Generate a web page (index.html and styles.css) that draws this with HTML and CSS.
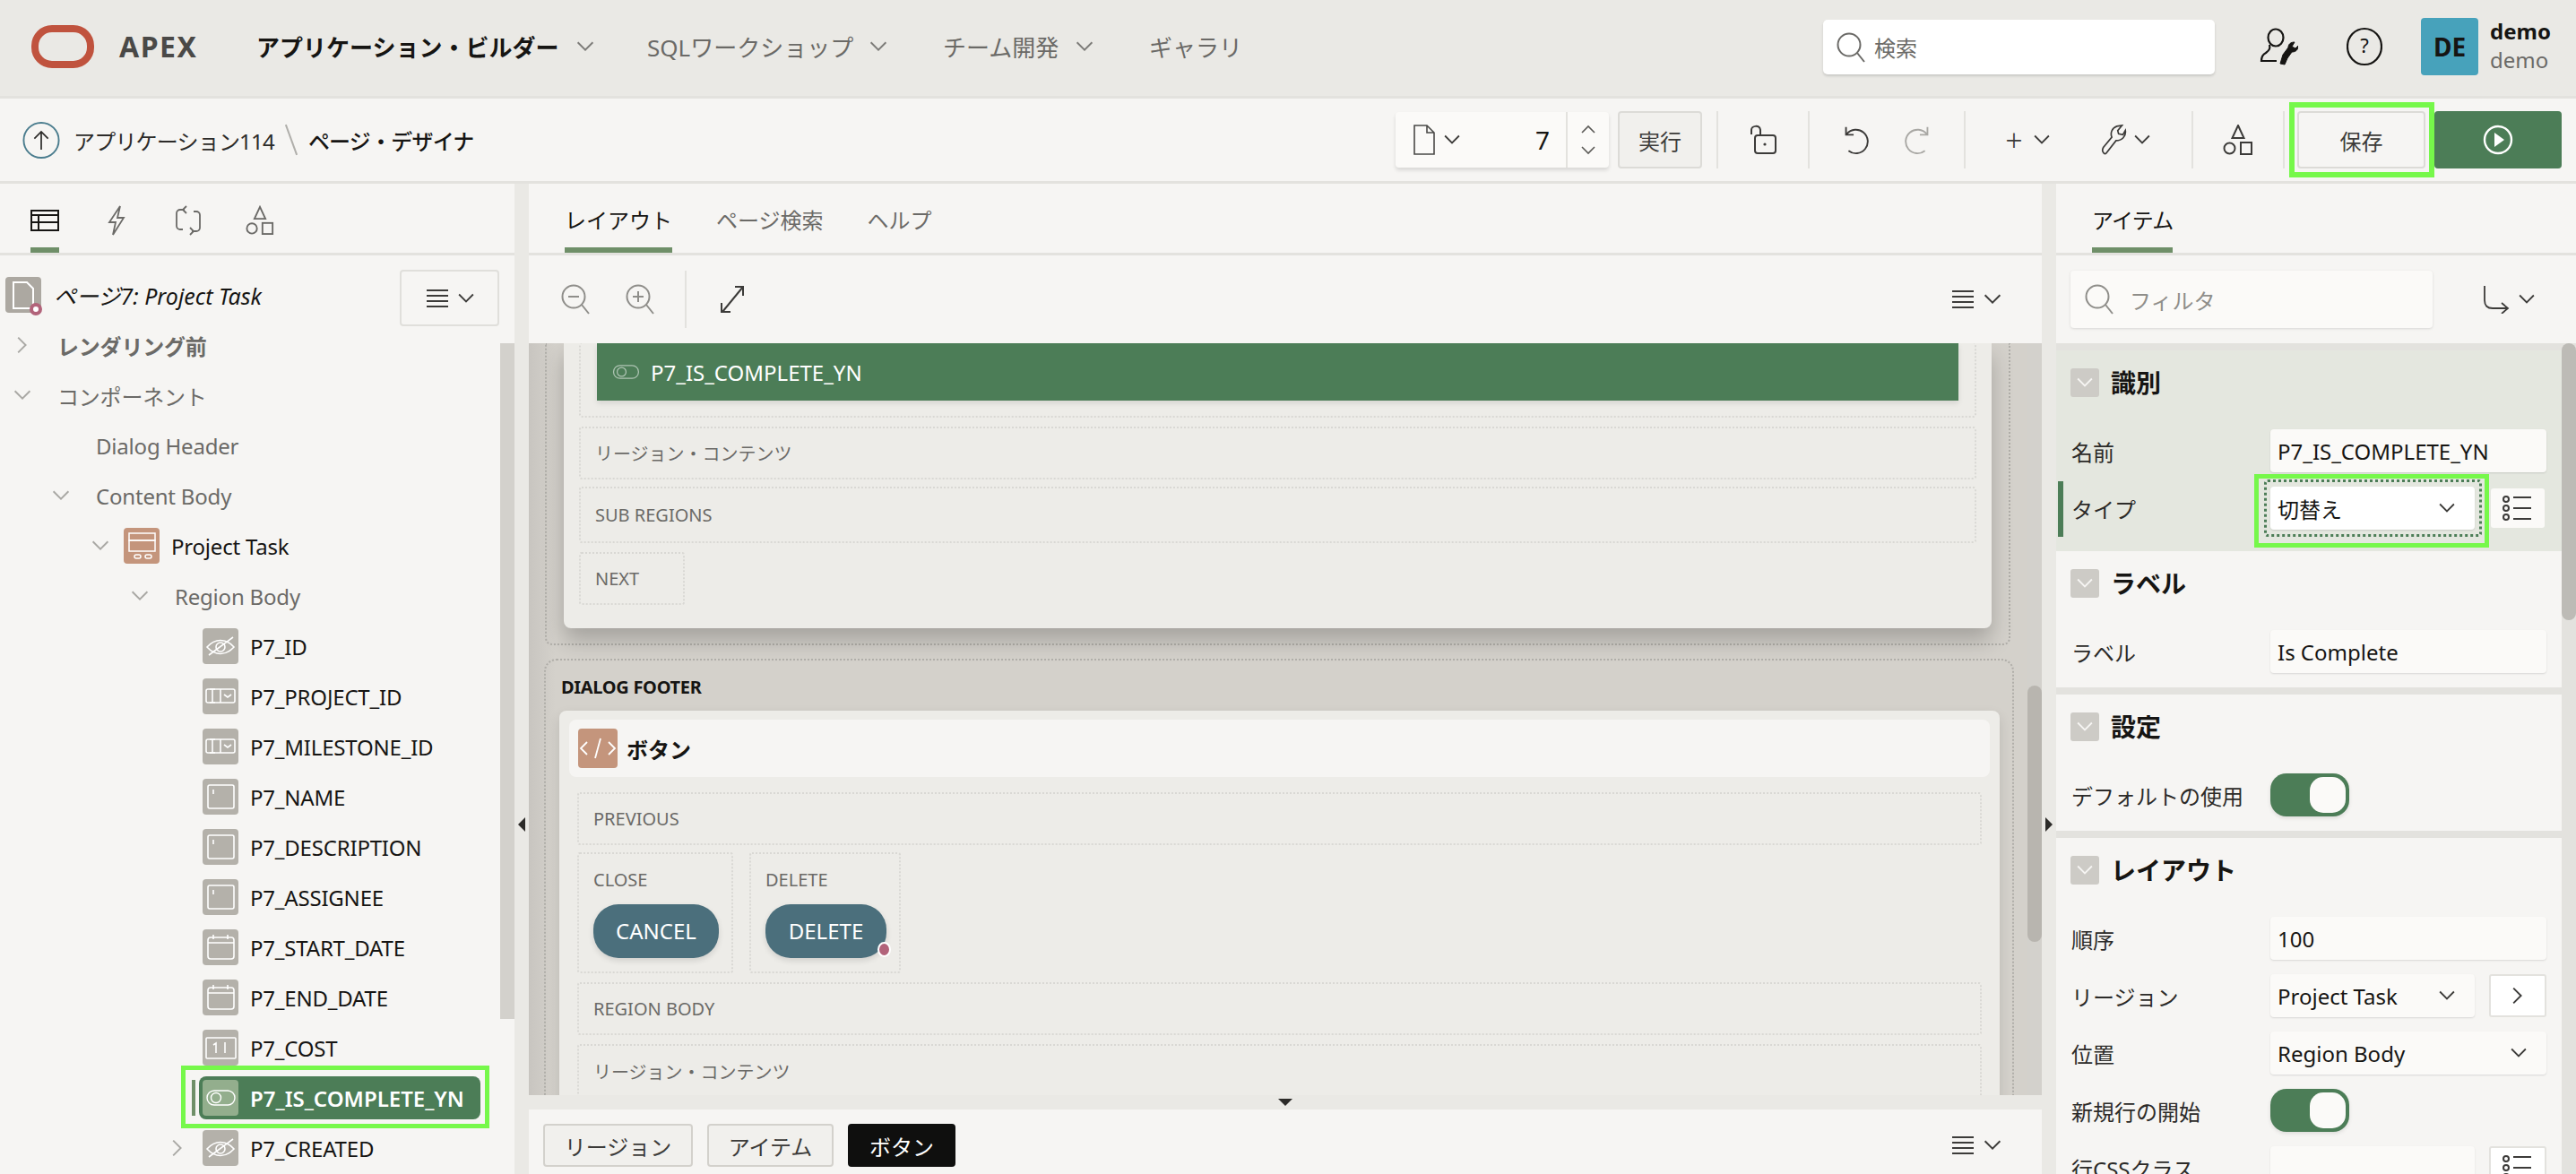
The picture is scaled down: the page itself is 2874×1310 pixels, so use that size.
FILE: index.html
```html
<!DOCTYPE html>
<html lang="ja">
<head>
<meta charset="utf-8">
<title>APEX ページ・デザイナ</title>
<link rel="stylesheet" href="styles.css">
</head>
<body>
<svg class="defs" width="0" height="0">
  <symbol id="chev" viewBox="0 0 16 10"><path d="M1 1l7 7 7-7" fill="none" stroke="currentColor" stroke-width="1.6"/></symbol>
  <symbol id="chevr" viewBox="0 0 10 16"><path d="M1 1l7 7-7 7" fill="none" stroke="currentColor" stroke-width="1.6"/></symbol>
  <symbol id="chevu" viewBox="0 0 16 10"><path d="M1 9l7-7 7 7" fill="none" stroke="currentColor" stroke-width="1.6"/></symbol>
  <symbol id="search" viewBox="0 0 32 34"><circle cx="14" cy="14" r="12.5" fill="none" stroke="currentColor" stroke-width="2"/><path d="M23 23l8 10" fill="none" stroke="currentColor" stroke-width="2"/></symbol>
  <symbol id="zoomout" viewBox="0 0 32 34"><circle cx="14" cy="14" r="12.5" fill="none" stroke="currentColor" stroke-width="2"/><path d="M23 23l8 10M8 14h12" fill="none" stroke="currentColor" stroke-width="2"/></symbol>
  <symbol id="zoomin" viewBox="0 0 32 34"><circle cx="14" cy="14" r="12.5" fill="none" stroke="currentColor" stroke-width="2"/><path d="M23 23l8 10M8 14h12M14 8v12" fill="none" stroke="currentColor" stroke-width="2"/></symbol>
  <symbol id="burger" viewBox="0 0 26 22"><path d="M1 2h24M1 8h24M1 14h24M1 20h24" fill="none" stroke="currentColor" stroke-width="2"/></symbol>
  <symbol id="shapes" viewBox="0 0 34 34"><g fill="none" stroke="currentColor" stroke-width="2"><path d="M17 1l6.5 14h-13z"/><circle cx="7.5" cy="26.5" r="6"/><rect x="20" y="20" width="12" height="13"/></g></symbol>
  <symbol id="list" viewBox="0 0 34 28"><g fill="none" stroke="currentColor" stroke-width="2"><circle cx="4" cy="4" r="3"/><circle cx="4" cy="14" r="3"/><circle cx="4" cy="24" r="3"/><path d="M12 2h20M12 14h20M12 26h20"/></g></symbol>
  <symbol id="eyeoff" viewBox="0 0 40 40"><g fill="none" stroke="#fff" stroke-width="1.6"><path d="M5 21c9-10 21-10 30 0-9 10-21 10-30 0z"/><circle cx="20" cy="21" r="5"/><path d="M7 30L34 10"/></g></symbol>
  <symbol id="sel" viewBox="0 0 40 40"><g fill="none" stroke="#fff" stroke-width="1.6"><rect x="4" y="12" width="32" height="15" rx="2"/><path d="M20 12v15M11 12v15M8 12h6M8 27h6"/><path d="M24 18l4 3 4-3"/></g></symbol>
  <symbol id="text" viewBox="0 0 40 40"><g fill="none" stroke="#fff" stroke-width="1.6"><rect x="6" y="7" width="29" height="26" rx="2"/><path d="M12 12v5"/></g></symbol>
  <symbol id="cal" viewBox="0 0 40 40"><g fill="none" stroke="#fff" stroke-width="1.6"><rect x="6" y="9" width="29" height="24" rx="3"/><path d="M6 15h29M12 6v5M28 6v5"/></g></symbol>
  <symbol id="num" viewBox="0 0 40 40"><g fill="none" stroke="#fff" stroke-width="1.6"><rect x="4" y="9" width="33" height="23" rx="1"/><path d="M25 14v12M12 17l3-2v11" /></g></symbol>
  <symbol id="tog" viewBox="0 0 40 40"><g fill="none" stroke="#fff" stroke-width="1.4"><rect x="5" y="12" width="31" height="16" rx="8"/><circle cx="15" cy="20" r="5.5"/></g></symbol>
  <symbol id="reg" viewBox="0 0 40 40"><g fill="none" stroke="#fff" stroke-width="1.5"><rect x="6" y="6" width="29" height="8" /><rect x="6" y="14" width="29" height="12"/><rect x="12" y="30" width="7" height="4" rx="2"/><rect x="24" y="30" width="7" height="4" rx="2"/></g></symbol>
</svg>

<header class="topbar">
  <svg class="logo" viewBox="0 0 70 48"><rect x="4" y="4" width="62" height="40" rx="19" fill="none" stroke="#c0533e" stroke-width="8"/></svg>
  <span class="brand">APEX</span>
  <nav class="nav">
    <a class="nav-item nav-active">アプリケーション・ビルダー<svg class="chev-n"><use href="#chev"/></svg></a>
    <a class="nav-item">SQLワークショップ<svg class="chev-n"><use href="#chev"/></svg></a>
    <a class="nav-item">チーム開発<svg class="chev-n"><use href="#chev"/></svg></a>
    <a class="nav-item">ギャラリ</a>
  </nav>
  <div class="searchbox"><svg class="search-ico"><use href="#search"/></svg><span>検索</span></div>
  <svg class="user-ico" viewBox="0 0 44 44"><g fill="none" stroke="#161513" stroke-width="2.2"><ellipse cx="19" cy="11" rx="8.5" ry="9.5"/><path d="M12 19c1 4 0 6-4 9-4 2-5 5-5 9h17"/><path d="M24 40l3-10 6-8c0-4 3-6 7-6l-3 5 4 2 3-3c0 5-3 7-7 7l-5 7-3 7z" fill="#161513" stroke-width="1"/></g></svg>
  <svg class="help-ico" viewBox="0 0 40 44"><ellipse cx="20" cy="22" rx="19" ry="20" fill="none" stroke="#161513" stroke-width="2.2"/><text x="20" y="29" text-anchor="middle" class="help-q">?</text></svg>
  <div class="avatar">DE</div>
  <div class="who"><b>demo</b><span>demo</span></div>
</header>

<section class="toolbar">
  <div class="crumbs">
    <span class="up"><svg viewBox="0 0 44 44"><circle cx="22" cy="22" r="20.5" fill="none" stroke="#4b7d8e" stroke-width="2"/><path d="M22 33V12M14 20l8-8 8 8" fill="none" stroke="#2c2b29" stroke-width="1.8"/></svg></span>
    <span class="crumb">アプリケーション114</span>
    <i class="slash"></i>
    <span class="crumb crumb-cur">ページ・デザイナ</span>
  </div>
  <div class="pagebox">
    <svg class="page-ico" viewBox="0 0 24 34"><path d="M1 1h14l8 8v24H1z M15 1v8h8" fill="none" stroke="#4a4947" stroke-width="1.6"/></svg>
    <svg class="chev-s"><use href="#chev"/></svg>
    <span class="pagenum">7</span>
    <span class="spin"><svg class="chev-t"><use href="#chevu"/></svg><svg class="chev-t"><use href="#chev"/></svg></span>
  </div>
  <button class="btn-run">実行</button>
  <div class="tg tg-lock"><svg class="ico-lock" viewBox="0 0 32 34"><path d="M3 11V6c0-5 9-6 10 0v6" fill="none" stroke="#3c3b39" stroke-width="2"/><rect x="7" y="12" width="23" height="20" rx="3" fill="none" stroke="#3c3b39" stroke-width="2"/><circle cx="18" cy="22" r="1.6" fill="#3c3b39"/></svg></div>
  <div class="tg tg-undo">
    <svg class="ico-undo" viewBox="0 0 32 36"><path d="M6 3v9h9M7 11a14 14 0 1 1 2 20" fill="none" stroke="#3c3b39" stroke-width="2"/></svg>
    <svg class="ico-undo ico-redo" viewBox="0 0 32 36"><path d="M26 3v9h-9M25 11a14 14 0 1 0-2 20" fill="none" stroke="#a9a8a4" stroke-width="2"/></svg>
  </div>
  <div class="tg tg-add">
    <span class="plus">+</span><svg class="chev-s"><use href="#chev"/></svg>
    <svg class="ico-wrench" viewBox="0 0 30 36"><path d="M3 33c-2-2-1-4 0-6l10-12c-2-5 0-11 6-13l6-1-5 6 1 4 5 1 3-5c1 7-4 12-11 12L7 33c-1 2-3 2-4 0z" fill="none" stroke="#3c3b39" stroke-width="1.8"/></svg><svg class="chev-s chev-w"><use href="#chev"/></svg>
  </div>
  <div class="tg tg-shape"><svg class="ico-shape"><use href="#shapes"/></svg></div>
  <button class="btn-save">保存</button>
  <button class="btn-play"><svg viewBox="0 0 34 34"><circle cx="17" cy="17" r="15" fill="none" stroke="#fff" stroke-width="2.4"/><path d="M13 9l11 8-11 8z" fill="#fff"/></svg></button>
</section>

<main class="main">
  <aside class="left">
    <div class="tabs tabs-icons">
      <span class="tabi tabi-on"><svg class="ti-grid" viewBox="0 0 32 24"><g fill="none" stroke="#161513" stroke-width="2"><rect x="1" y="1" width="30" height="22"/><path d="M1 6h30M1 14h30M9 6v17"/></g></svg></span>
      <span class="tabi"><svg viewBox="0 0 32 34"><path d="M20 1L8 19h7l-3 14 12-19h-7z" fill="none" stroke="#6b6a67" stroke-width="1.8"/></svg></span>
      <span class="tabi"><svg viewBox="0 0 32 34"><g fill="none" stroke="#6b6a67" stroke-width="1.8"><path d="M12 5H7a4 4 0 0 0-4 4v14a4 4 0 0 0 4 4h3M20 29h5a4 4 0 0 0 4-4V11a4 4 0 0 0-4-4h-3"/><path d="M14 1l-4 4 4 4M18 25l4 4-4 4"/></g></svg></span>
      <span class="tabi tabi-shape"><svg><use href="#shapes"/></svg></span>
    </div>
    <div class="treewrap">
      <div class="tree">
        <div class="rootrow">
          <span class="rooticon"><svg viewBox="0 0 40 40"><path d="M9 6h15l7 7v22H9z" fill="none" stroke="#fff" stroke-width="2"/></svg><i class="pin"></i></span>
          <em class="roottext">ページ7: Project Task</em>
          <span class="menubtn"><svg class="ico-burger"><use href="#burger"/></svg><svg class="chev-s"><use href="#chev"/></svg></span>
        </div>
        <div class="row l0"><svg class="tg-r"><use href="#chevr"/></svg><b class="t-strong">レンダリング前</b></div>
        <div class="row l0"><svg class="tg-d"><use href="#chev"/></svg><span class="t-grey">コンポーネント</span></div>
        <div class="row l1"><span class="tg-none"></span><span class="t-grey">Dialog Header</span></div>
        <div class="row l1"><svg class="tg-d"><use href="#chev"/></svg><span class="t-grey">Content Body</span></div>
        <div class="row l2"><svg class="tg-d"><use href="#chev"/></svg><span class="ti ti-reg"><svg><use href="#reg"/></svg></span><span>Project Task</span></div>
        <div class="row l3"><svg class="tg-d"><use href="#chev"/></svg><span class="t-grey">Region Body</span></div>
        <div class="row l4"><span class="tg-none"></span><span class="ti"><svg><use href="#eyeoff"/></svg></span><span>P7_ID</span></div>
        <div class="row l4"><span class="tg-none"></span><span class="ti"><svg><use href="#sel"/></svg></span><span>P7_PROJECT_ID</span></div>
        <div class="row l4"><span class="tg-none"></span><span class="ti"><svg><use href="#sel"/></svg></span><span>P7_MILESTONE_ID</span></div>
        <div class="row l4"><span class="tg-none"></span><span class="ti"><svg><use href="#text"/></svg></span><span>P7_NAME</span></div>
        <div class="row l4"><span class="tg-none"></span><span class="ti"><svg><use href="#text"/></svg></span><span>P7_DESCRIPTION</span></div>
        <div class="row l4"><span class="tg-none"></span><span class="ti"><svg><use href="#text"/></svg></span><span>P7_ASSIGNEE</span></div>
        <div class="row l4"><span class="tg-none"></span><span class="ti"><svg><use href="#cal"/></svg></span><span>P7_START_DATE</span></div>
        <div class="row l4"><span class="tg-none"></span><span class="ti"><svg><use href="#cal"/></svg></span><span>P7_END_DATE</span></div>
        <div class="row l4"><span class="tg-none"></span><span class="ti"><svg><use href="#num"/></svg></span><span>P7_COST</span></div>
        <div class="row rowsel"><div class="selbox"><span class="ti ti-on"><svg><use href="#tog"/></svg></span><b>P7_IS_COMPLETE_YN</b></div></div>
        <div class="row l4"><svg class="tg-r tg-r2"><use href="#chevr"/></svg><span class="ti"><svg><use href="#eyeoff"/></svg></span><span>P7_CREATED</span></div>
      </div>
      <div class="vbar vbar-left"><i></i></div>
    </div>
  </aside>
  <div class="split"><i class="tri-l"></i></div>

  <section class="center">
    <div class="tabs tabs-center">
      <span class="tab tab-on">レイアウト</span><span class="tab">ページ検索</span><span class="tab">ヘルプ</span>
    </div>
    <div class="canvasbar">
      <svg class="zoom"><use href="#zoomout"/></svg>
      <svg class="zoom zoom2"><use href="#zoomin"/></svg>
      <i class="vsep"></i>
      <svg class="expand" viewBox="0 0 28 32"><path d="M26 2L3 30M17 2h9v10M2 20v10h10" fill="none" stroke="#3c3b39" stroke-width="2"/></svg>
      <span class="grow"></span>
      <svg class="ico-burger"><use href="#burger"/></svg><svg class="chev-s chev-end"><use href="#chev"/></svg>
    </div>
    <div class="canvaswrap">
      <div class="canvas">
        <div class="dlg dlg-top">
          <div class="card card-top">
            <div class="slot slot-item"><div class="pageitem"><svg><use href="#tog"/></svg><span>P7_IS_COMPLETE_YN</span></div></div>
            <div class="slot slot-a">リージョン・コンテンツ</div>
            <div class="slot slot-b">SUB REGIONS</div>
            <div class="slot slot-next">NEXT</div>
          </div>
        </div>
        <div class="dlg dlg-foot">
          <div class="dlgtitle">DIALOG FOOTER</div>
          <div class="card card-foot">
            <div class="cardhead"><span class="codeico"><svg viewBox="0 0 44 44"><path d="M10 15l-7 7 7 7M34 15l7 7-7 7M25 11l-6 22" fill="none" stroke="#fff" stroke-width="1.8"/></svg></span><b>ボタン</b></div>
            <div class="slot2 s-prev">PREVIOUS</div>
            <div class="slotrow">
              <div class="slot2 s-btn s-close">CLOSE<span class="pill">CANCEL</span></div>
              <div class="slot2 s-btn s-del">DELETE<span class="pill pill-del">DELETE<i class="pin pin-btn"></i></span></div>
            </div>
            <div class="slot2 s-prev s-reg">REGION BODY</div>
            <div class="slot2 s-content">リージョン・コンテンツ</div>
          </div>
        </div>
      </div>
      <div class="vbar vbar-center"><i></i></div>
    </div>
    <div class="hsplit"><i class="tri-d"></i></div>
    <div class="gallery">
      <button class="gbtn gbtn-a">リージョン</button>
      <button class="gbtn gbtn-b">アイテム</button>
      <button class="gbtn gbtn-on">ボタン</button>
      <span class="grow"></span>
      <svg class="ico-burger"><use href="#burger"/></svg><svg class="chev-s chev-end"><use href="#chev"/></svg>
    </div>
  </section>
  <div class="split"><i class="tri-r"></i></div>

  <aside class="right">
    <div class="tabs tabs-right"><span class="tab tab-on">アイテム</span></div>
    <div class="filterbar">
      <div class="filter"><svg class="filter-ico"><use href="#search"/></svg><span>フィルタ</span></div>
      <svg class="goto" viewBox="0 0 30 32"><path d="M2 1v16c0 6 3 9 9 9h16M21 20l7 6-7 6" fill="none" stroke="#3c3b39" stroke-width="1.8"/></svg>
      <svg class="chev-s"><use href="#chev"/></svg>
    </div>
    <div class="propwrap">
      <div class="props">
        <section class="group group-on">
          <h3 class="ghead"><span class="gtoggle"><svg><use href="#chev"/></svg></span>識別</h3>
          <div class="prop"><label>名前</label><div class="inp">P7_IS_COMPLETE_YN</div></div>
          <div class="prop prop-type"><label>タイプ</label><div class="inp inp-sel inp-focus">切替え<svg><use href="#chev"/></svg></div><span class="lbtn lbtn-plain"><svg><use href="#list"/></svg></span></div>
        </section>
        <section class="group">
          <h3 class="ghead"><span class="gtoggle"><svg><use href="#chev"/></svg></span>ラベル</h3>
          <div class="prop"><label>ラベル</label><div class="inp">Is Complete</div></div>
        </section>
        <i class="gdiv"></i>
        <section class="group">
          <h3 class="ghead"><span class="gtoggle"><svg><use href="#chev"/></svg></span>設定</h3>
          <div class="prop"><label>デフォルトの使用</label><span class="switch"><i></i></span></div>
        </section>
        <i class="gdiv"></i>
        <section class="group">
          <h3 class="ghead"><span class="gtoggle"><svg><use href="#chev"/></svg></span>レイアウト</h3>
          <div class="prop"><label>順序</label><div class="inp">100</div></div>
          <div class="prop"><label>リージョン</label><div class="inp inp-sel">Project Task<svg><use href="#chev"/></svg></div><span class="lbtn"><svg class="lbtn-chev"><use href="#chevr"/></svg></span></div>
          <div class="prop"><label>位置</label><div class="inp inp-sel inp-full">Region Body<svg><use href="#chev"/></svg></div></div>
          <div class="prop"><label>新規行の開始</label><span class="switch"><i></i></span></div>
          <div class="prop"><label>行CSSクラス</label><div class="inp inp-sel"></div><span class="lbtn"><svg><use href="#list"/></svg></span></div>
        </section>
      </div>
      <div class="vbar vbar-right"><i></i></div>
    </div>
  </aside>
</main>
<div class="lime lime-save"></div>
</body>
</html>
```
FILE: styles.css
```css
* { box-sizing: border-box; }
html, body { margin: 0; height: 100%; overflow: hidden; }
body {
  width: 2874px; height: 1310px; position: relative;
  font-family: "Noto Sans", "Noto Sans CJK JP", sans-serif;
  font-size: 24px; color: #161513; background: #f6f5f3;
  display: flex; flex-direction: column;
}
button { font: inherit; }
svg { display: block; flex: none; }
.defs { position: absolute; }
.grow { flex: 1; }

/* top bar */
.topbar { height: 107px; flex: none; background: #eae9e5; display: flex; align-items: center; position: relative; padding-bottom: 4px; }
.logo { width: 70px; height: 48px; margin-left: 35px; }
.brand { margin-left: 28px; font-size: 32px; font-weight: 700; color: #4a4947; letter-spacing: 1.5px; width: 153px; }
.nav { display: flex; align-items: center; }
.nav-item { display: flex; align-items: center; font-size: 26px; color: #6b6a67; white-space: nowrap; }
.nav-item:nth-child(1) { width: 436px; }
.nav-item:nth-child(2) { width: 330px; }
.nav-item:nth-child(3) { width: 230px; }
.nav-active { font-weight: 700; color: #161513; }
.chev-n { width: 20px; height: 12px; margin-left: 20px; color: #7c7b78; }
.nav-item:nth-child(2) .chev-n { margin-left: 18px; }
.nav-item:nth-child(3) .chev-n { margin-left: 19px; }
.searchbox { position: absolute; left: 2034px; top: 22px; width: 437px; height: 61px; background: #fff; border-radius: 5px; box-shadow: 0 2px 3px rgba(0,0,0,.14); display: flex; align-items: center; font-size: 24px; color: #6b6a67; padding-left: 15px; }
.search-ico { width: 32px; height: 34px; margin-right: 10px; color: #6b6a67; }
.user-ico { position: absolute; left: 2520px; top: 31px; width: 44px; height: 44px; }
.help-ico { position: absolute; left: 2618px; top: 30px; width: 40px; height: 44px; }
.help-q { font-size: 22px; fill: #161513; }
.avatar { position: absolute; left: 2701px; top: 20px; width: 64px; height: 64px; border-radius: 4px; background: #47a2bb; display: flex; align-items: center; justify-content: center; font-weight: 700; font-size: 28px; color: #161513; }
.who { position: absolute; left: 2778px; top: 19px; display: flex; flex-direction: column; font-size: 24px; line-height: 32px; }
.who span { color: #6b6a67; }

/* toolbar */
.toolbar { height: 98px; flex: none; display: flex; align-items: center; border-top: 3px solid #e3e2de; border-bottom: 3px solid #e3e2de; padding-right: 16px; background: #f6f5f3; }
.crumbs { flex: 1; display: flex; align-items: center; padding-left: 25px; }
.up { width: 42px; height: 43px; margin-right: 15px; }
.up svg { width: 42px; height: 43px; }
.crumb { font-size: 24px; white-space: nowrap; color: #2c2b29; letter-spacing: -.8px; }
.crumb-cur { font-weight: 500; color: #161513; }
.slash { width: 2px; height: 36px; background: #b0afab; transform: rotate(-20deg); margin: 0 18px 0 18px; }
.pagebox { width: 238px; height: 62px; background: #fbfaf8; border-radius: 4px; box-shadow: 0 3px 4px rgba(0,0,0,.12); display: flex; align-items: center; padding-left: 20px; }
.page-ico { width: 24px; height: 34px; }
.chev-s { width: 18px; height: 12px; color: #3c3b39; margin-left: 10px; }
.pagenum { margin-left: auto; font-size: 28px; margin-right: 18px; }
.spin { width: 48px; height: 100%; border-left: 2px solid #e3e2de; display: flex; flex-direction: column; align-items: center; justify-content: space-evenly; }
.chev-t { width: 16px; height: 10px; color: #5b5a57; }
.btn-run { width: 94px; height: 64px; margin-left: 10px; background: #f1f0ed; border: 2px solid #dcdbd7; border-radius: 4px; font-size: 24px; color: #3c3b39; padding: 0; }
.tg { height: 64px; display: flex; align-items: center; justify-content: center; border-left: 2px solid #e3e2de; flex: none; }
.tg-lock { width: 102px; margin-left: 16px; }
.ico-lock { width: 32px; height: 34px; }
.tg-undo { width: 174px; gap: 40px; }
.ico-undo { width: 32px; height: 34px; }
.tg-add { width: 254px; justify-content: flex-start; padding-left: 43px; }
.plus { font-size: 34px; color: #3c3b39; font-weight: 300; line-height: 1; width: 22px; text-align: center; }
.tg-add .chev-s { margin-left: 11px; }
.ico-wrench { width: 30px; height: 34px; margin-left: 56px; }
.tg-add .chev-w { margin-left: 8px; }
.tg-shape { width: 104px; border-right: 2px solid #e3e2de; }
.ico-shape { width: 34px; height: 34px; color: #3c3b39; }
.btn-save { width: 143px; height: 64px; margin-left: 14px; background: #f6f5f3; border: 2px solid #dcdbd7; border-radius: 4px; font-size: 24px; color: #3c3b39; padding: 0; }
.btn-play { width: 142px; height: 64px; margin-left: 10px; background: #4c7d57; border: 0; border-radius: 4px; padding: 0; display: flex; align-items: center; justify-content: center; }
.btn-play svg { width: 34px; height: 34px; }
.lime { position: absolute; border: 6px solid #76f84a; pointer-events: none; }
.lime-save { left: 2554px; top: 114px; width: 162px; height: 84px; }

/* main */
.main { flex: 1; min-height: 0; display: flex; }
.left { width: 574px; flex: none; display: flex; flex-direction: column; overflow: hidden; }
.split { width: 16px; flex: none; background: #eae9e5; display: flex; justify-content: center; height: 100%; align-items: flex-start; }
.tri-l, .tri-r { display: block; margin-top: 707px; width: 0; height: 0; border-top: 8px solid transparent; border-bottom: 8px solid transparent; }
.tri-l { border-right: 8px solid #2c2b29; }
.tri-r { border-left: 8px solid #2c2b29; }
.center { width: 1688px; flex: none; display: flex; flex-direction: column; overflow: hidden; }
.right { flex: 1; min-width: 0; display: flex; flex-direction: column; overflow: hidden; }

.tabs { height: 80px; flex: none; border-bottom: 3px solid #e3e2de; display: flex; }
.tabs-icons { padding-left: 34px; gap: 48px; align-items: flex-start; }
.tabi { width: 32px; height: 77px; padding-top: 24px; border-bottom: 6px solid transparent; }
.tabi svg { width: 32px; height: 34px; overflow: visible; }
.tabi .ti-grid { height: 24px; margin-top: 5px; }
.tabi-shape { color: #6b6a67; }
.tabi-on { border-bottom-color: #6f8f68; }
.tabs-center { padding-left: 40px; gap: 49px; }
.tabs-right { padding-left: 40px; }
.tab { height: 77px; font-size: 24px; line-height: 82px; color: #6b6a67; white-space: nowrap; border-bottom: 6px solid transparent; }
.tab-on { color: #161513; border-bottom-color: #6f8f68; }
.tabs-right .tab { letter-spacing: -.8px; }

/* tree */
.treewrap { flex: 1; min-height: 0; display: flex; }
.tree { width: 558px; flex: none; font-size: 24px; white-space: nowrap; }
.rootrow { height: 72px; padding: 16px 1px 0 6px; display: flex; align-items: flex-start; }
.rooticon { position: relative; width: 40px; height: 40px; margin-top: 8px; background: #aca8a1; border-radius: 4px; }
.rooticon svg { width: 40px; height: 40px; }
.pin { position: absolute; width: 14px; height: 14px; border-radius: 50%; background: #b2637a; border: 2px solid #fff; }
.rooticon .pin { left: 27px; top: 29px; background: #fff; border: 4px solid #b2637a; }
.roottext { margin: 10px 0 0 14px; font-size: 25px; }
.menubtn { margin-left: auto; width: 111px; height: 63px; border: 2px solid #e0dfdb; border-radius: 4px; display: flex; align-items: center; justify-content: center; }
.ico-burger { width: 26px; height: 22px; color: #3c3b39; }
.row { height: 56px; display: flex; align-items: center; letter-spacing: -.2px; }
.l0 { padding-left: 15px; }
.l1 { padding-left: 58px; }
.l2 { padding-left: 102px; }
.l3 { padding-left: 146px; }
.l4 { padding-left: 188px; }
.tg-d { width: 20px; height: 12px; color: #a9a8a4; margin-right: 29px; }
.tg-r { width: 12px; height: 20px; color: #a9a8a4; margin: 0 33px 0 4px; }
.tg-none { width: 20px; margin-right: 29px; }
.l2 .tg-d { margin-right: 16px; }
.l4 .tg-none { margin-right: 18px; }
.l4 .tg-r2 { margin-left: 4px; margin-right: 22px; }
.t-grey { color: #6b6a67; }
.t-strong { color: #6b6a67; font-weight: 700; }
.ti { width: 40px; height: 40px; background: #b4b1aa; border-radius: 4px; margin-right: 13px; flex: none; }
.ti svg { width: 40px; height: 40px; }
.ti-reg { background: #c4957c; }
.ti-on { background: #93ae8d; }
.rowsel { padding-left: 222px; }
.selbox { position: relative; width: 314px; height: 48px; background: #4c7d57; border-radius: 8px; display: flex; align-items: center; padding-left: 4px; color: #fff; }
.selbox b { font-weight: 600; letter-spacing: 0; }
.selbox::before { content: ""; position: absolute; left: -8px; top: 4px; width: 4px; height: 40px; background: #6f8f68; }
.selbox::after { content: ""; position: absolute; left: -20px; right: -10px; top: -12px; bottom: -10px; border: 5px solid #76f84a; }
.vbar { width: 16px; flex: none; background: #f0efec; }
.vbar i { display: block; background: #d3d1cc; }
.vbar-left { background: #f6f5f3; padding-top: 98px; }
.vbar-left i { height: 754px; }

/* center */
.canvasbar { height: 98px; flex: none; display: flex; align-items: center; padding: 0 45px 0 36px; }
.zoom { width: 32px; height: 34px; color: #8f8e8a; }
.zoom2 { margin-left: 40px; }
.vsep { width: 2px; height: 64px; background: #e3e2de; margin: 0 37px 0 34px; }
.expand { width: 28px; height: 32px; }
.chev-end { margin-left: 10px; width: 20px; }
.canvaswrap { flex: 1; min-height: 0; display: flex; background: #d4d1cb; }
.canvas { width: 1672px; flex: none; overflow: hidden; background: linear-gradient(90deg, #c8c5c0 0, #d4d1cb 30px); }
.vbar-center { background: #d3d1cc; padding-top: 382px; }
.vbar-center i { height: 286px; background: #b8b5af; border-radius: 8px; }
.dlg { border: 2px dotted #b0aea9; }
.dlg-top { margin: 0 19px 0 18px; height: 337px; border-top: 0; border-radius: 0 0 8px 8px; padding: 0 19px 0 19px; }
.card { background: #edece8; border-radius: 8px; }
.card-top { height: 318px; padding: 0 17px; box-shadow: 0 14px 24px rgba(0,0,0,.22); border-radius: 0 0 8px 8px; display: flex; flex-direction: column; align-items: flex-start; }
.slot { border: 2px dotted #d9d8d4; width: 100%; font-size: 20px; color: #6b6a67; padding-left: 16px; display: flex; align-items: center; border-radius: 3px; }
.slot-item { height: 83px; border-top: 0; padding: 0 18px 19px; align-items: flex-start; }
.pageitem { width: 100%; height: 64px; background: #4c7d57; display: flex; align-items: center; color: #fff; font-size: 24px; padding-left: 14px; box-shadow: 0 3px 6px rgba(0,0,0,.1); }
.pageitem svg { width: 36px; height: 36px; margin-right: 10px; opacity: .55; }
.slot-a { height: 59px; margin-top: 10px; }
.slot-b { height: 63px; margin-top: 8px; }
.slot-next { height: 59px; width: 118px; margin-top: 10px; }
.dlg-foot { margin: 15px 15px 0 17px; border-radius: 14px; padding: 0 14px 0 15px; height: 500px; }
.dlgtitle { height: 56px; line-height: 60px; padding-left: 2px; font-size: 20px; font-weight: 700; letter-spacing: -.3px; }
.card-foot { padding: 10px 11px; height: 440px; box-shadow: 0 6px 14px rgba(0,0,0,.12); }
.cardhead { height: 64px; background: #f6f5f3; border-radius: 8px; display: flex; align-items: center; padding-left: 10px; font-size: 24px; margin-bottom: 17px; }
.codeico { width: 44px; height: 44px; background: #c4957c; border-radius: 4px; margin-right: 10px; }
.codeico svg { width: 44px; height: 44px; }
.slot2 { border: 2px dotted #d9d8d4; font-size: 20px; color: #6b6a67; border-radius: 3px; margin-left: 9px; margin-right: 9px; padding-left: 16px; }
.s-prev { height: 59px; display: flex; align-items: center; }
.slotrow { display: flex; gap: 18px; margin: 8px 9px; }
.slotrow .slot2 { margin: 0; }
.s-btn { height: 135px; padding-top: 14px; line-height: 30px; }
.s-close { width: 174px; }
.s-del { width: 169px; }
.pill { position: relative; display: flex; align-items: center; justify-content: center; height: 60px; margin-top: 12px; width: 140px; background: #4b6f7c; color: #fff; border-radius: 28px; font-size: 24px; box-shadow: 0 3px 6px rgba(0,0,0,.12); }
.pill-del { width: 135px; }
.pin-btn { right: -5px; bottom: 1px; width: 15px; height: 17px; }
.s-reg { margin-top: 10px; }
.s-content { height: 80px; margin-top: 10px; padding-top: 14px; border-bottom: 0; }
.hsplit { height: 16px; flex: none; background: #eae9e5; display: flex; justify-content: center; align-items: center; }
.tri-d { width: 0; height: 0; border-left: 8px solid transparent; border-right: 8px solid transparent; border-top: 8px solid #2c2b29; }
.gallery { height: 72px; flex: none; display: flex; align-items: flex-start; padding: 16px 45px 0 16px; gap: 16px; }
.gallery > .ico-burger { margin-top: 13px; }
.gallery > .chev-end { margin: 18px 0 0 -6px; }
.gbtn { height: 48px; border: 2px solid #d3d1cc; background: #f1f0ed; border-radius: 4px; font-size: 24px; color: #3c3b39; padding: 0; }
.gbtn-a { width: 167px; }
.gbtn-b { width: 141px; }
.gbtn-on { width: 120px; background: #0f0f0e; border-color: #0f0f0e; color: #fff; }

/* right */
.filterbar { height: 98px; flex: none; display: flex; align-items: center; padding-left: 16px; }
.filter { width: 404px; height: 64px; background: #fbfaf8; border-radius: 4px; box-shadow: 0 1px 3px rgba(0,0,0,.12); display: flex; align-items: center; padding-left: 16px; color: #8f8e8a; font-size: 24px; }
.filter-ico { width: 32px; height: 34px; margin-right: 18px; color: #8f8e8a; }
.goto { width: 30px; height: 32px; margin-left: 56px; }
.propwrap { flex: 1; min-height: 0; display: flex; }
.props { width: 564px; flex: none; border-top: 8px solid #e3e2de; }
.vbar-right { background: #e3e2de; }
.vbar-right i { height: 309px; background: #bdbbb6; border-radius: 8px; }
.group { padding: 20px 16px 16px; }
.group-on { background: #e4e7df; padding-bottom: 24px; position: relative; }
.group-on .prop-type::before { content: ""; position: absolute; left: 2px; top: 146px; width: 6px; height: 62px; background: #4c7d57; }
.gdiv { display: block; height: 8px; background: #e3e2de; }
.ghead { height: 32px; margin: 0 0 36px; display: flex; align-items: center; font-size: 28px; font-weight: 700; line-height: 36px; }
.gtoggle { width: 32px; height: 32px; background: #cdcbc6; border-radius: 3px; margin-right: 13px; display: flex; align-items: center; justify-content: center; color: #f6f5f3; }
.gtoggle svg { width: 18px; height: 12px; }
.prop { display: flex; align-items: center; height: 48px; margin-bottom: 16px; font-size: 24px; }
.prop:last-child { margin-bottom: 0; }
.prop label { width: 223px; flex: none; padding-left: 1px; color: #2c2b29; white-space: nowrap; }
.inp { width: 308px; height: 48px; background: #fbfaf8; border-radius: 4px; box-shadow: 0 1px 2px rgba(0,0,0,.12); display: flex; align-items: center; padding-left: 8px; white-space: nowrap; }
.inp-sel { width: 228px; position: relative; }
.inp-sel svg { position: absolute; right: 22px; top: 18px; width: 18px; height: 12px; color: #3c3b39; }
.inp-full { width: 308px; }
.inp-focus { background: #fff; }
.inp-focus::before { content: ""; position: absolute; left: -7px; right: -8px; top: -8px; bottom: -8px; border: 3px dotted #4c7d57; border-radius: 4px; }
.inp-focus::after { content: ""; position: absolute; left: -18px; right: -16px; top: -14px; bottom: -20px; border: 5px solid #76f84a; }
.lbtn { width: 64px; height: 48px; margin-left: 16px; background: #fff; border: 2px solid #e3e2de; border-radius: 3px; display: flex; align-items: center; justify-content: center; color: #3c3b39; }
.lbtn svg { width: 34px; height: 28px; }
.lbtn svg.lbtn-chev { width: 12px; height: 20px; }
.lbtn-plain { width: 60px; height: 44px; margin-left: 18px; border: 0; background: #fbfaf8; }
.switch { width: 88px; height: 48px; background: #4c7d57; border-radius: 18px; padding: 4px; display: flex; justify-content: flex-end; box-shadow: 0 2px 4px rgba(0,0,0,.1); }
.switch i { width: 40px; height: 40px; background: #fbfaf8; border-radius: 15px; }
```
